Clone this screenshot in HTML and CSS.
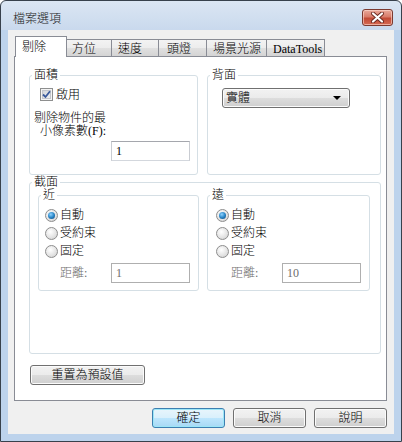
FILE: index.html
```html
<!DOCTYPE html>
<html>
<head>
<meta charset="utf-8">
<link rel="stylesheet" href="styles.css">
</head>
<body>
<div class="window">
  <div class="titlebar">
    <span class="title">檔案選項</span>
    <div class="close">
      <svg width="15" height="11" viewBox="0 0 15 11">
        <path d="M3 1.5 L12 9.5 M12 1.5 L3 9.5" stroke="#6b2a22" stroke-width="4" stroke-linecap="round"/>
        <path d="M3 1.5 L12 9.5 M12 1.5 L3 9.5" stroke="#ffffff" stroke-width="2.2" stroke-linecap="round"/>
      </svg>
    </div>
  </div>
  <div class="client">
    <div class="tabs">
      <div class="tab active w-cull">剔除</div>
      <div class="tab w-pos">方位</div>
      <div class="tab w-speed">速度</div>
      <div class="tab w-head">頭燈</div>
      <div class="tab w-light">場景光源</div>
      <div class="tab w-dt">DataTools</div>
    </div>
    <div class="panel">
      <div class="toprow">
        <fieldset class="group g-area">
          <legend>面積</legend>
          <div class="check">
            <span class="checkbox">
              <svg width="9" height="9" viewBox="0 0 9 9"><path d="M1 4.5 L3.5 7 L8 1.2" fill="none" stroke="#3a5a9c" stroke-width="1.8"/></svg>
            </span>
            <span>啟用</span>
          </div>
          <div class="minpix"><span>剔除物件的最</span><span>小像素數(F):</span></div>
          <div class="textbox tb-area">1</div>
        </fieldset>
        <fieldset class="group g-back">
          <legend>背面</legend>
          <div class="combo"><span>實體</span><span class="arrow"></span></div>
        </fieldset>
      </div>
      <fieldset class="group g-section">
        <legend>截面</legend>
        <div class="subrow">
          <fieldset class="group g-near">
            <legend>近</legend>
            <div class="radiorow first"><span class="radio on"></span><span>自動</span></div>
            <div class="radiorow"><span class="radio"></span><span>受約束</span></div>
            <div class="radiorow"><span class="radio"></span><span>固定</span></div>
            <div class="distrow"><span class="dislabel">距離:</span><div class="textbox disabled">1</div></div>
          </fieldset>
          <fieldset class="group g-far">
            <legend>遠</legend>
            <div class="radiorow first"><span class="radio on"></span><span>自動</span></div>
            <div class="radiorow"><span class="radio"></span><span>受約束</span></div>
            <div class="radiorow"><span class="radio"></span><span>固定</span></div>
            <div class="distrow"><span class="dislabel">距離:</span><div class="textbox disabled">10</div></div>
          </fieldset>
        </div>
      </fieldset>
      <div class="btn reset">重置為預設值</div>
    </div>
    <div class="footer">
      <div class="btn default">確定</div>
      <div class="btn">取消</div>
      <div class="btn">說明</div>
    </div>
  </div>
</div>
</body>
</html>
```

FILE: styles.css
```css
* { box-sizing: border-box; }
body {
  margin: 0;
  width: 402px;
  height: 442px;
  overflow: hidden;
  font-family: "Liberation Serif", "Noto Sans CJK TC", serif;
  font-size: 12px;
  font-weight: 300;
  line-height: 12px;
  color: #000;
  background: #fff;
}
.window {
  width: 402px;
  height: 442px;
  border: 1px solid #38414c;
  border-radius: 6px 6px 0 0;
  background: linear-gradient(#dbe6f3, #c9d9ed 29px, #bdd3ec 29px, #bdd3ec);
  display: flex;
  flex-direction: column;
}
.titlebar {
  height: 29px;
  display: flex;
  align-items: flex-start;
  padding: 0 8px 0 12px;
}
.title {
  margin-top: 12px;
  color: #1a1a1a;
}
.close {
  margin-left: auto;
  margin-top: 8px;
  width: 31px;
  height: 17px;
  border: 1px solid #7b3a30;
  border-radius: 3px;
  background: linear-gradient(#e9a99b, #d97c6a 45%, #c24a36 55%, #d56a52);
  box-shadow: inset 0 0 0 1px rgba(255,220,210,0.6);
  display: flex;
  align-items: center;
  justify-content: center;
}
.client {
  flex: 1;
  margin: 0 7px 7px 7px;
  background: #f0f0f0;
  padding: 6px 7px 0 6px;
  display: flex;
  flex-direction: column;
}
.tabs {
  display: flex;
  align-items: flex-end;
  height: 20px;
  margin-left: 1px;
}
.tab {
  height: 17px;
  border: 1px solid #898c95;
  border-bottom: none;
  margin-left: -1px;
  background: linear-gradient(#f3f3f3, #ececec 50%, #e0e0e0 50%, #d4d4d4);
  padding: 3px 0 0 6px;
  white-space: nowrap;
}
.tab.active {
  height: 21px;
  margin-left: 0;
  margin-bottom: -1px;
  background: #fff;
  position: relative;
  z-index: 2;
  padding: 4px 0 0 6px;
}
.w-cull { width: 52px; }
.w-pos { width: 46px; padding-left: 5px; }
.w-speed { width: 48px; }
.w-head { width: 49px; padding-left: 8px; }
.w-light { width: 61px; }
.w-dt { width: 59px; }
.panel {
  height: 345px;
  width: 373px;
  border: 1px solid #898c95;
  background: #fff;
  padding: 12px 5px 0 14px;
  display: flex;
  flex-direction: column;
}
.toprow {
  display: flex;
  gap: 9px;
}
.group {
  margin: 0;
  padding: 0;
  min-width: 0;
  border: 1px solid #d5dfe5;
  border-radius: 3px;
}
.group > legend {
  margin-left: 2px;
  padding: 0 2px;
  line-height: 12px;
  height: 12px;
}
.g-area { width: 169px; height: 106px; display: flex; flex-direction: column; }
.g-back { width: 174px; height: 106px; }
.check {
  display: flex;
  align-items: center;
  margin: 7px 0 0 10px;
  height: 13px;
}
.checkbox {
  width: 13px;
  height: 13px;
  border: 1px solid #8e8f8f;
  background: linear-gradient(135deg, #cbcfd5, #f6f6f6);
  box-shadow: inset 0 0 0 1px #f4f4f4, inset 0 0 0 2px #c3c6cc;
  display: flex;
  align-items: center;
  justify-content: center;
  margin-right: 3px;
}
.minpix {
  margin: 11px 0 0 4px;
  display: flex;
  flex-direction: column;
  align-items: flex-end;
  width: fit-content;
  line-height: 13px;
}
.textbox {
  width: 79px;
  height: 20px;
  border: 1px solid #abadb3;
  border-color: #abadb3 #dbdfe6 #e3e9ef #e2e3ea;
  background: #fff;
  padding: 3px 0 0 4px;
  line-height: 13px;
}
.tb-area {
  margin: 3px 0 0 81px;
  border-color: #a5a7ad #c9ccd2 #d3d7dd #c9ccd2;
}
.combo {
  margin: 7px 0 0 14px;
  width: 128px;
  height: 20px;
  border: 1px solid #707070;
  border-radius: 3px;
  background: linear-gradient(#f2f2f2, #ebebeb 50%, #dddddd 50%, #cfcfcf);
  box-shadow: inset 0 0 0 1px #fbfbfb;
  display: flex;
  align-items: center;
  padding: 0 8px 0 3px;
}
.arrow {
  margin-left: auto;
  width: 0;
  height: 0;
  border-left: 4px solid transparent;
  border-right: 4px solid transparent;
  border-top: 4px solid #000;
}
.g-section {
  margin-top: 1px;
  width: 352px;
  height: 178px;
}
.subrow {
  display: flex;
  gap: 8px;
  margin: 1px 0 0 8px;
}
.g-near { width: 161px; height: 102px; }
.g-far { width: 163px; height: 102px; }
.radiorow {
  display: flex;
  align-items: center;
  height: 18px;
  margin-left: 6px;
}
.g-far .radiorow { margin-left: 8px; }
.radiorow.first { margin-top: 5px; }
.radio {
  width: 13px;
  height: 13px;
  border-radius: 50%;
  border: 1px solid #8d8d8d;
  background: radial-gradient(circle at 40% 35%, #ffffff, #e2e2e2 60%, #c9c9c9);
  margin-right: 2px;
  display: flex;
  align-items: center;
  justify-content: center;
}
.radio.on::after {
  content: "";
  width: 7px;
  height: 7px;
  border-radius: 50%;
  background: radial-gradient(circle at 40% 35%, #8fd2ff, #2a87c8 50%, #0d3f74);
}
.distrow {
  display: flex;
  align-items: center;
  margin-top: 3px;
  padding-left: 21px;
}
.g-far .distrow { padding-left: 23px; }
.dislabel { color: #6d6d6d; }
.textbox.disabled {
  margin-left: auto;
  margin-right: 8px;
  border: 1px solid #afafaf;
  color: #6d6d6d;
}
.btn {
  height: 20px;
  border: 1px solid #707070;
  border-radius: 3px;
  background: linear-gradient(#f2f2f2, #ebebeb 50%, #dddddd 50%, #cfcfcf);
  box-shadow: inset 0 0 0 1px #fbfbfb;
  display: flex;
  align-items: center;
  justify-content: center;
}
.reset {
  margin: 11px 0 0 1px;
  width: 115px;
}
.footer {
  display: flex;
  justify-content: flex-end;
  gap: 8px;
  margin-top: 7px;
  padding-right: 0;
}
.footer .btn { width: 73px; }
.btn.default {
  border-color: #3c7fb1;
  background: linear-gradient(#e8f5fc, #d9f0fc 50%, #bee6fd 50%, #a7d9f5);
  box-shadow: inset 0 0 0 1px #9ce6f7;
}
```
